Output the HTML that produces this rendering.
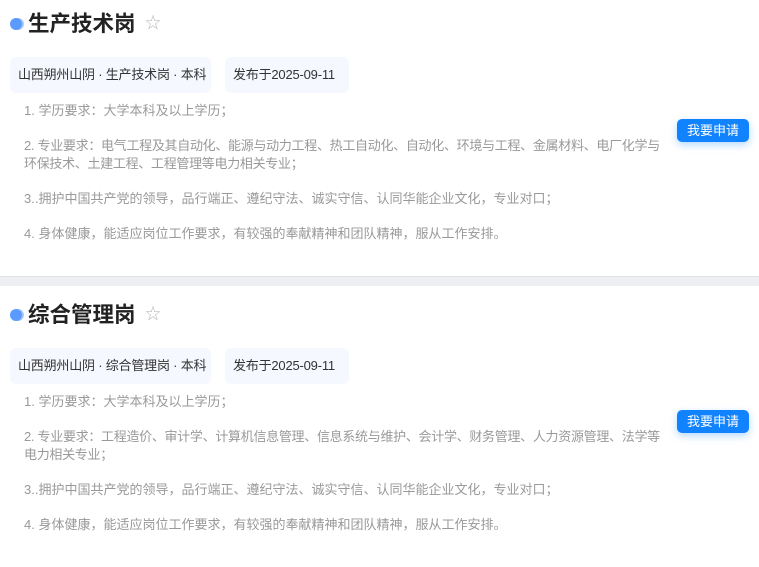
<!DOCTYPE html>
<html><head><meta charset="utf-8"><style>
*{margin:0;padding:0;box-sizing:border-box}
body{width:759px;height:555px;background:#fff;font-family:"Liberation Sans","Noto Sans CJK SC",sans-serif;position:relative;overflow:hidden}
.sec{position:absolute;left:0;width:759px;height:276px}
.dot{position:absolute;left:10px;top:18px;width:12px;height:12px;border-radius:50%;background:#5b9bff;box-shadow:2px 0 0 #a9c8ff}
.title{position:absolute;left:28px;top:10px;font-size:21.5px;font-weight:bold;color:#222;line-height:28px}
.star{position:absolute;left:145px;top:14px;font-size:16px;color:#bbb;line-height:20px}
.tag{position:absolute;top:57px;height:36px;line-height:36px;background:#f5f8fe;border-radius:6px;font-size:13px;color:#333;padding:0 0 0 8px;white-space:nowrap;letter-spacing:-0.2px}
.txt{position:absolute;left:24px;top:102px;width:640px;font-size:13px;color:#999;line-height:18px}
.txt p{margin-bottom:17px}
.txt p.l{letter-spacing:-0.3px}
.btn{position:absolute;left:677px;top:119px;width:72px;height:23px;background:#1283ff;color:#fff;font-size:13px;line-height:23px;text-align:center;border-radius:5px;box-shadow:0 3px 8px rgba(18,131,255,.3)}
.sep{position:absolute;left:0;top:276px;width:759px;height:10px;background:#eeeff2;border-top:1px solid #e2e3e8}
</style></head><body>
<div class="sec" style="top:0">
<div class="dot"></div><div class="title">生产技术岗</div><div class="star">☆</div>
<div class="tag" style="left:10px;width:201px">山西朔州山阴 · 生产技术岗 · 本科</div>
<div class="tag" style="left:225px;width:124px">发布于2025-09-11</div>
<div class="txt"><p>1. 学历要求：大学本科及以上学历；</p><p class="l">2. 专业要求：电气工程及其自动化、能源与动力工程、热工自动化、自动化、环境与工程、金属材料、电厂化学与环保技术、土建工程、工程管理等电力相关专业；</p><p>3..拥护中国共产党的领导，品行端正、遵纪守法、诚实守信、认同华能企业文化，专业对口；</p><p>4. 身体健康，能适应岗位工作要求，有较强的奉献精神和团队精神，服从工作安排。</p></div>
<div class="btn">我要申请</div>
</div>
<div class="sep"></div>
<div class="sec" style="top:291px">
<div class="dot"></div><div class="title">综合管理岗</div><div class="star">☆</div>
<div class="tag" style="left:10px;width:201px">山西朔州山阴 · 综合管理岗 · 本科</div>
<div class="tag" style="left:225px;width:124px">发布于2025-09-11</div>
<div class="txt"><p>1. 学历要求：大学本科及以上学历；</p><p class="l">2. 专业要求：工程造价、审计学、计算机信息管理、信息系统与维护、会计学、财务管理、人力资源管理、法学等电力相关专业；</p><p>3..拥护中国共产党的领导，品行端正、遵纪守法、诚实守信、认同华能企业文化，专业对口；</p><p>4. 身体健康，能适应岗位工作要求，有较强的奉献精神和团队精神，服从工作安排。</p></div>
<div class="btn">我要申请</div>
</div>
</body></html>
